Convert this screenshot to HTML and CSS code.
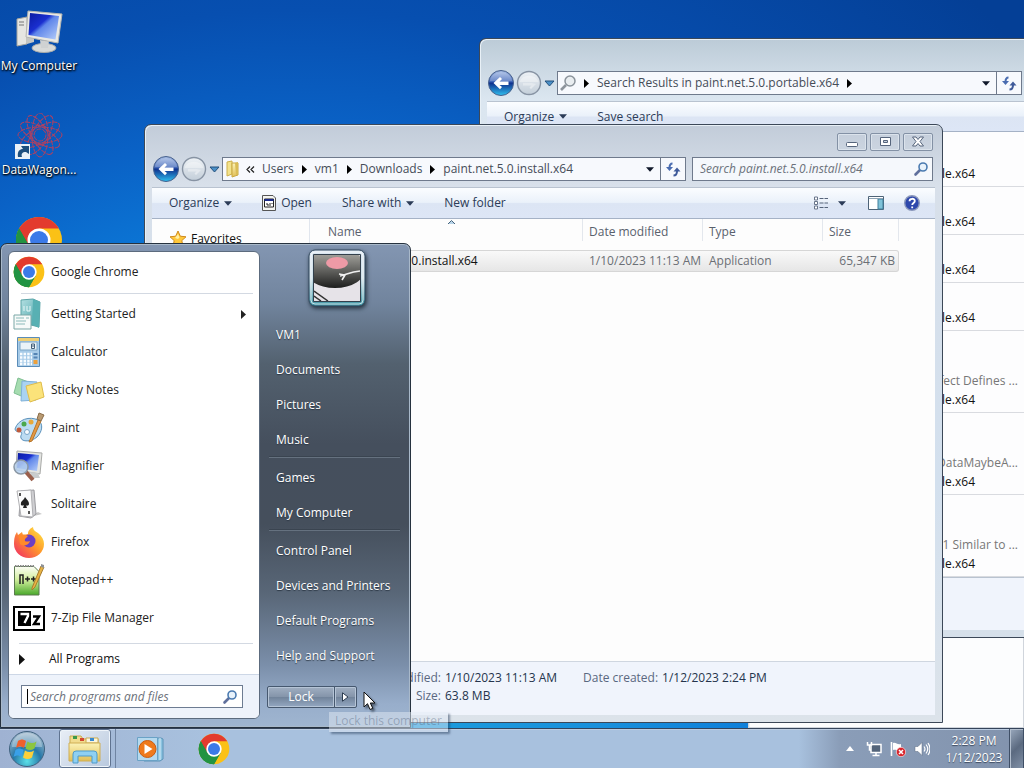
FILE: index.html
```html
<!DOCTYPE html>
<html lang="en">
<head>
<meta charset="utf-8">
<title>Desktop</title>
<link rel="stylesheet" href="styles.css">
</head>
<body>
<svg class="defs" aria-hidden="true">
  <defs>
    <linearGradient id="orb" x1="0" y1="0" x2="0" y2="1"><stop offset="0" stop-color="#a9bfe6"/><stop offset=".45" stop-color="#3d64b8"/><stop offset=".5" stop-color="#0f2f8c"/><stop offset="1" stop-color="#2fc0f0"/></linearGradient>
    <linearGradient id="glass" x1="0" y1="0" x2="0" y2="1"><stop offset="0" stop-color="#eef2f6"/><stop offset="1" stop-color="#c3ced9"/></linearGradient>
    <linearGradient id="screen" x1="0" y1="0" x2="1" y2="1"><stop offset="0" stop-color="#0a1aa0"/><stop offset=".4" stop-color="#1a2fd0"/><stop offset=".5" stop-color="#5f86ea"/><stop offset="1" stop-color="#b8d0fa"/></linearGradient>
    <linearGradient id="folder" x1="0" y1="0" x2="0" y2="1"><stop offset="0" stop-color="#fbf3b8"/><stop offset="1" stop-color="#e2bf55"/></linearGradient>
    <linearGradient id="teal" x1="0" y1="0" x2="1" y2="1"><stop offset="0" stop-color="#b5e0e2"/><stop offset="1" stop-color="#3b9da3"/></linearGradient>
    <linearGradient id="fox" x1="1" y1="0" x2="0" y2="1"><stop offset="0" stop-color="#fff04a"/><stop offset=".45" stop-color="#ff9a2a"/><stop offset="1" stop-color="#f0246a"/></linearGradient>
    <linearGradient id="npp" x1="0" y1="0" x2="0" y2="1"><stop offset="0" stop-color="#fbfdf5"/><stop offset=".45" stop-color="#d5f0a0"/><stop offset="1" stop-color="#49a82a"/></linearGradient>
    <radialGradient id="start" cx=".5" cy=".85" r=".8"><stop offset="0" stop-color="#5be0e8"/><stop offset=".5" stop-color="#2678a8"/><stop offset="1" stop-color="#9eb8cc"/></radialGradient>
    <symbol id="i-chrome" viewBox="0 0 48 48">
      <circle cx="24" cy="24" r="23" fill="#fbc116"/>
      <path d="M24 24 4.100 12.500A23 23 0 0 1 43.900 12.500H24z" fill="#e33b2e"/>
      <path d="M4.100 12.500A23 23 0 0 0 24 47L34 29.700 24 24z" fill="#229342"/>
      <path d="M4.100 12.500 14 29.700 24 24V12.500z" fill="#e33b2e"/>
      <path d="M4.100 12.500 14 29.700 24 35l-0.500 0 10.400-5.300L24 47A23 23 0 0 1 4.100 12.500z" fill="#229342"/>
      <circle cx="24" cy="24" r="11.500" fill="#fff"/><circle cx="24" cy="24" r="9" fill="#3b7ae8"/>
    </symbol>
    <symbol id="i-search" viewBox="0 0 16 16">
      <path d="M7.500 8.500 2.500 13.500" stroke="#5f6f9c" stroke-width="2.600" stroke-linecap="round"/>
      <circle cx="10" cy="6" r="4" fill="#e8f2fb" stroke="#4a7ab0" stroke-width="1.600"/>
    </symbol>
    <symbol id="i-back" viewBox="0 0 28 28">
      <circle cx="14" cy="14" r="12.500" fill="url(#orb)" stroke="#46608c"/>
      <path d="M3 12a11 9 0 0 1 22 0z" fill="#fff" opacity=".22"/>
      <path d="M6.500 14 13 8l2 2-2.500 2.500h9v3.400h-9L15 18l-2 2.200z" fill="#fff"/>
    </symbol>
    <symbol id="i-fwd" viewBox="0 0 28 28">
      <circle cx="14" cy="14" r="11.500" fill="url(#glass)" stroke="#8793a3" stroke-width="1.400"/>
      <path d="M21 15l-5 5-1.500-1.500 2-2H8v-2.600h9z" fill="#e4e9ee"/>
      <path d="M4.500 13a10 9 0 0 1 19 0z" fill="#fff" opacity=".35"/>
    </symbol>
    <symbol id="i-drop" viewBox="0 0 12 12"><path d="M2 4h9L6.500 9z" fill="#4a90c8" stroke="#23507c"/></symbol>
    <symbol id="i-down" viewBox="0 0 9 5"><path d="M0 0h9L4.500 5z" fill="currentColor"/></symbol>
    <symbol id="i-right" viewBox="0 0 5 9"><path d="M0 0v9L5 4.500z" fill="currentColor"/></symbol>
    <symbol id="i-refresh" viewBox="0 0 16 16">
      <path d="M7.500 2.500C5.500 2.500 4.500 4 4.500 7" fill="none" stroke="#4a6cb0" stroke-width="2"/><path d="M1 6h7L4.500 10z" fill="#4a6cb0"/>
      <path d="M8.500 14.500c2.500 0 3.500-1.500 3.500-4.500" fill="none" stroke="#3f5a9a" stroke-width="2"/><path d="M8.500 10.500h7L12 6.500z" fill="#3f5a9a"/>
    </symbol>
    <symbol id="i-computer" viewBox="0 0 48 44">
      <path d="M2 9 12 7v27L2 36z" fill="#e6e6e2" stroke="#a4a49e"/><path d="M12 7l7 2v23l-7 2z" fill="#c5c6c4"/><path d="M4 12h5M4 15h5" stroke="#777"/>
      <ellipse cx="29" cy="38" rx="12" ry="4.500" fill="#d8dad8" stroke="#a9abaa"/><path d="M25 30l9 1-1 7h-7z" fill="#cfd2d2"/>
      <path d="M13 1 47 4 43 33 11 27z" fill="#e9e9e4" stroke="#b5b6b2"/><path d="M15 3 44 6 40.500 29.500 13.500 25z" fill="url(#screen)"/>
    </symbol>
  </defs>
</svg>

<main class="desktop">
  <div class="shortcuts">
    <a class="shortcut" href="#computer">
      <svg class="pic" viewBox="0 0 48 44"><use href="#i-computer"/></svg><span>My Computer</span>
    </a>
    <a class="shortcut wagon" href="#datawagon">
      <svg class="pic" viewBox="0 0 48 48">
        <g fill="none" stroke="#b3405f" stroke-width="1" stroke-dasharray="5 1">
          <circle cx="25" cy="22" r="6"/><circle cx="25" cy="22" r="10"/>
          <ellipse cx="25" cy="22" rx="22" ry="8"/><ellipse cx="25" cy="22" rx="22" ry="8" transform="rotate(30 25 22)"/><ellipse cx="25" cy="22" rx="22" ry="8" transform="rotate(60 25 22)"/><ellipse cx="25" cy="22" rx="22" ry="8" transform="rotate(90 25 22)"/><ellipse cx="25" cy="22" rx="22" ry="8" transform="rotate(120 25 22)"/><ellipse cx="25" cy="22" rx="22" ry="8" transform="rotate(150 25 22)"/>
        </g>
        <path d="M0 31h15v15H0z" fill="#e9f1f7"/><path d="M3 44c-1-6 2-8 5-8l-2-3h8v8l-3-2c-4 0-5 2-4 5z" fill="#1d4f7e"/>
      </svg><span>DataWagon...</span>
    </a>
    <a class="shortcut chrome" href="#chrome" aria-label="Google Chrome"><svg class="pic" viewBox="0 0 48 48"><use href="#i-chrome"/></svg></a>
  </div>

  <div class="window blank"></div>

  <section class="window results">
    <div class="caption"></div>
    <div class="navrow">
      <button class="round" aria-label="Back"><svg><use href="#i-back"/></svg></button>
      <button class="round" aria-label="Forward"><svg><use href="#i-fwd"/></svg></button>
      <button class="recent" aria-label="Recent pages"><svg><use href="#i-drop"/></svg></button>
      <nav class="address" aria-label="Location">
        <svg class="place" viewBox="0 0 18 18"><path d="M7 11 2 16" stroke="#8d949c" stroke-width="2.600"/><circle cx="11" cy="7" r="5" fill="#e9edf0" stroke="#8b939b" stroke-width="1.500"/></svg>
        <svg class="sep"><use href="#i-right"/></svg>
        <button class="crumb">Search Results in paint.net.5.0.portable.x64</button>
        <svg class="sep"><use href="#i-right"/></svg>
        <button class="drop" aria-label="Previous locations"><svg><use href="#i-down"/></svg></button>
        <button class="refresh" aria-label="Refresh"><svg><use href="#i-refresh"/></svg></button>
      </nav>
    </div>
    <div class="client">
      <div class="commands"><button>Organize <svg class="tri"><use href="#i-down"/></svg></button><button>Save search</button></div>
      <ul class="hits">
        <li class="first"><span>portable.x64</span></li>
        <li><span>portable.x64</span></li>
        <li><span>portable.x64</span></li>
        <li><span>portable.x64</span></li>
        <li class="tall"><em>Effect Defines ...</em><span>portable.x64</span></li>
        <li class="tall"><em>DataMaybeA...</em><span>portable.x64</span></li>
        <li class="tall"><em>t'1 Similar to ...</em><span>portable.x64</span></li>
      </ul>
      <div class="details"></div>
    </div>
  </section>

  <section class="window explorer">
    <div class="caption">
      <button aria-label="Minimize"><svg viewBox="0 0 16 16"><rect x="2.500" y="8.500" width="11" height="4" rx="1" fill="#fff" stroke="#56657c"/></svg></button>
      <button aria-label="Maximize"><svg viewBox="0 0 16 16"><path d="M3.500 3.500h10v8h-10zM6.500 6.500v2h4v-2z" fill="#fff" fill-rule="evenodd" stroke="#56657c"/></svg></button>
      <button aria-label="Close"><svg viewBox="0 0 16 16"><path d="M2.500 3H6l2 2.500L10 3h3.500L10 7.500l3.500 4.500H10L8 9.500 6 12H2.500L6 7.500z" fill="#fff" stroke="#56657c"/></svg></button>
    </div>
    <div class="navrow">
      <button class="round" aria-label="Back"><svg><use href="#i-back"/></svg></button>
      <button class="round" aria-label="Forward"><svg><use href="#i-fwd"/></svg></button>
      <button class="recent" aria-label="Recent pages"><svg><use href="#i-drop"/></svg></button>
      <nav class="address" aria-label="Location">
        <svg class="place" viewBox="0 0 18 18"><path d="M3 2l5-1v13l-5 2z" fill="#f3e28c" stroke="#cdb04a"/><path d="M8 3h6v12l-6 2z" fill="url(#folder)" stroke="#c9a844"/><path d="M11 3l3-1v12l-2 1z" fill="#d9bc56"/></svg>
        <svg class="chev" viewBox="0 0 9 7"><path d="M4 .5 1 3.500l3 3M8 .5 5 3.500l3 3" fill="none" stroke="#222" stroke-width="1.200"/></svg>
        <button class="crumb">Users</button><svg class="sep"><use href="#i-right"/></svg>
        <button class="crumb">vm1</button><svg class="sep"><use href="#i-right"/></svg>
        <button class="crumb">Downloads</button><svg class="sep"><use href="#i-right"/></svg>
        <button class="crumb">paint.net.5.0.install.x64</button>
        <button class="drop" aria-label="Previous locations"><svg><use href="#i-down"/></svg></button>
        <button class="refresh" aria-label="Refresh"><svg><use href="#i-refresh"/></svg></button>
      </nav>
      <label class="find"><input type="text" aria-label="Search folder" placeholder="Search paint.net.5.0.install.x64"><svg><use href="#i-search"/></svg></label>
    </div>
    <div class="client">
      <div class="commands">
        <button>Organize <svg class="tri"><use href="#i-down"/></svg></button>
        <button class="open"><svg class="app" viewBox="0 0 14 16"><path d="M.5.5H11l2.500 2.500v12.500H.5z" fill="#f4f5f2" stroke="#555"/><path d="M2.500 4h9v8h-9z" fill="#fff" stroke="#222"/><path d="M2.500 4h9v2h-9z" fill="#1a2a8a"/><path d="M4 9h2v2M8 8v3M9.500 8.500h1" stroke="#222" fill="none"/></svg>Open</button>
        <button>Share with <svg class="tri"><use href="#i-down"/></svg></button>
        <button>New folder</button>
        <span class="spring"></span>
        <button class="view" aria-label="Change your view"><svg class="list" viewBox="0 0 16 14"><path d="M1.500 1h3v3h-3zM1.500 5.500h3v3h-3zM1.500 10h3v3h-3z" fill="#fff" stroke="#68758a"/><path d="M6.500 2.500h4M11.500 2.500H15M6.500 7h4M11.500 7H15M6.500 11.500h4M11.500 11.500H15" stroke="#56647a"/></svg><svg class="tri"><use href="#i-down"/></svg></button>
        <button class="pane" aria-label="Show the preview pane"><svg viewBox="0 0 16 14"><path d="M.5.500h15v13H.5z" fill="#fff" stroke="#4d6377"/><path d="M10 3h5v10h-5z" fill="#7fc2d8" stroke="#417f9b"/><path d="M1 2.500h14" stroke="#8aa1b3"/></svg></button>
        <button class="help" aria-label="Get help"><svg viewBox="0 0 16 16"><circle cx="8" cy="8" r="7.300" fill="#2e48ac" stroke="#8b98bb" stroke-width="1.400"/><path d="M5.500 6.200C5.500 3 10.800 3 10.800 6 10.800 8 8.200 8 8.200 10M8.200 11.500v1.700" fill="none" stroke="#fff" stroke-width="1.800"/></svg></button>
      </div>
      <div class="body">
        <aside class="tree"><a href="#favorites"><svg viewBox="0 0 16 16"><path d="M8 0l2.300 5.200 5.700.6-4.200 3.800 1.200 5.600L8 12.400l-5 2.800 1.200-5.600L0 5.800l5.700-.6z" fill="#ffc83a" stroke="#d08a1c"/><path d="M8 3l1.500 3.500L8 8 5 7z" fill="#fff0a8"/></svg>Favorites</a></aside>
        <div class="files">
          <svg class="sorted" viewBox="0 0 7 4"><path d="M0 4 3.500.5 7 4" fill="#b8d4e8" stroke="#47647c"/></svg>
          <table>
            <colgroup><col class="c-name"><col class="c-date"><col class="c-type"><col class="c-size"></colgroup>
            <thead><tr><th>Name</th><th>Date modified</th><th>Type</th><th>Size</th></tr></thead>
            <tbody><tr><td>paint.net.5.0.install.x64</td><td>1/10/2023 11:13 AM</td><td>Application</td><td>65,347 KB</td></tr></tbody>
          </table>
        </div>
      </div>
      <dl class="details">
        <dt>Date modified:</dt><dd>1/10/2023 11:13 AM</dd><dt>Date created:</dt><dd>1/12/2023 2:24 PM</dd>
        <dt>Size:</dt><dd>63.8 MB</dd>
      </dl>
    </div>
  </section>

  <section class="startmenu" aria-label="Start menu">
    <div class="programs">
      <ul>
        <li class="pinned"><a href="#c"><svg class="ico" viewBox="0 0 48 48"><use href="#i-chrome"/></svg>Google Chrome</a></li>
        <li><a href="#g"><svg class="ico" viewBox="0 0 32 32"><path d="M8 2l12-1 7 3-1 25-8-2-10 1z" fill="url(#teal)" stroke="#5aa3a6"/><path d="M20 1l7 3-1 26-7-4z" fill="#58b0b3"/><path d="M11 8v5M14 8v5h3V8" stroke="#e8f8f8" fill="none"/><path d="M1 17h17v14H1z" fill="#f7faf9" stroke="#7aa7a6"/><path d="M3 20h8M3 23h10M3 26h9M13 20h3" stroke="#8bbaba"/></svg>Getting Started<svg class="more"><use href="#i-right"/></svg></a></li>
        <li><a href="#k"><svg class="ico" viewBox="0 0 32 32"><path d="M4.500 1.500h22v29h-22z" fill="#a7cbe8" stroke="#5a8cb8"/><path d="M5 2h21v3H5z" fill="#efcf74"/><path d="M7 6h17v8H7z" fill="#eaf3f8" stroke="#7da6c5"/><path d="M18.500 8h3v4.500h-3zM18.500 10h3" fill="none" stroke="#44607a"/><path d="M7 18h12M7 21.500h12M7 25h12M7 28h12" stroke="#f8fcff" stroke-width="2.400" stroke-dasharray="2.400 1.200"/><path d="M20.500 18h4M20.500 21.500h4" stroke="#5484b4" stroke-width="2"/><path d="M20.500 26h4" stroke="#eda03b" stroke-width="4"/></svg>Calculator</a></li>
        <li><a href="#s"><svg class="ico" viewBox="0 0 32 32"><path d="M5 4l13 5-5 15-12-5z" fill="#a6dcb0" stroke="#7fbf92"/><path d="M9 7l15 1-1 18-15 1z" fill="#a9d3f2" stroke="#7fb1d8"/><path d="M13 12l15-4 3 15-14 5z" fill="#fbe37a" stroke="#e0bd4b"/></svg>Sticky Notes</a></li>
        <li><a href="#p"><svg class="ico" viewBox="0 0 32 32"><path d="M2 17C5 7 17 4 25 8c6 4 4 12-1 17-6 5-15 5-16 1-1-3 2-4 0-6-2-1-5 1-6-3z" fill="#bcdcf2" stroke="#5a90ba"/><circle cx="6" cy="18" r="2.500" fill="#c05a3a"/><circle cx="11" cy="12" r="2.500" fill="#4ba84b"/><circle cx="18" cy="10" r="2.500" fill="#e8a93a"/><circle cx="14" cy="20" r="2.500" fill="#f8fcff" stroke="#7aa6c8"/><path d="M16 30l9-22 3 1-9 20z" fill="#e59a45" stroke="#b5742a"/><path d="M24 7l2-6 5 2-3 6z" fill="#b99a72" stroke="#8a6c48"/></svg>Paint</a></li>
        <li><a href="#m"><svg class="ico" viewBox="0 0 32 32"><path d="M4 1l25 2-2 21-24-4z" fill="#e4e5e2" stroke="#a9aaa8"/><path d="M5 3l21 2-2 16-20-3z" fill="url(#screen)"/><path d="M17 22l8 1 2 5h-9z" fill="#c9cccd"/><path d="M13 22l7 8" stroke="#9a5f4c" stroke-width="4"/><circle cx="8" cy="17" r="7" fill="#b5d0ee" fill-opacity=".85" stroke="#8b98a5" stroke-width="1.500"/></svg>Magnifier</a></li>
        <li><a href="#o"><svg class="ico" viewBox="0 0 32 32"><path d="M17 29l12-3-4-2z" fill="#c7c7c7"/><path d="M8 3l13-1 2 24-5 4-12-2z" fill="#cfcfd2" stroke="#9a9a9e"/><path d="M4 3l14-1 2 27-12-1z" fill="#fcfcfc" stroke="#b0b0b3"/><path d="M12 9c2 3 4 4 4 7 0 2-3 2-3 1l1 3h-4l1-3c-1 1-4 1-3-2 0-2 3-3 4-6z" fill="#222"/><path d="M6 5h2v3H6zM15 23h2v3h-2z" fill="#555"/></svg>Solitaire</a></li>
        <li><a href="#f"><svg class="ico" viewBox="0 0 32 32"><path d="M4 6l1 3 4-3 1 3 5-1c0-4 3-6 5-7 0 3 2 4 5 6 4 3 6 7 6 11a15 14 0 0 1-30 0C1 12 2 9 4 6z" fill="url(#fox)"/><circle cx="16" cy="15" r="6.500" fill="#6b3fc4"/><path d="M6 10c3-2 6-2 9 0l-3 3c-1 3 2 3 5 2-1 4-6 6-10 3z" fill="#ff8a2a"/></svg>Firefox</a></li>
        <li><a href="#n"><svg class="ico" viewBox="0 0 32 32"><path d="M1.500 2.500H21l5 5v23.500H1.500z" fill="url(#npp)" stroke="#5c7a4e"/><path d="M2 2h20" stroke="#888" stroke-width="2" stroke-dasharray="1.500 1"/><path d="M7 20v-9h3v9M12 15h5M14.500 12.500v5M18 15h5M20.500 12.500v5" fill="none" stroke="#222" stroke-width="1.500"/><path d="M19 24 28 2l3 1-9 20-3 3z" fill="#e9b444" stroke="#a87c2e"/><path d="M28 0l3 1v3l-3-1z" fill="#8f9296"/></svg>Notepad++</a></li>
        <li><a href="#z"><svg class="ico" viewBox="0 0 32 32"><path d="M1 5h30v23H1z" fill="#fff" stroke="#000" stroke-width="2"/><path d="M5 9h13v15H5z"/><path d="M7.500 12H15v2l-3.500 7" fill="none" stroke="#fff" stroke-width="2.400"/><path d="M20 14.500h6l-5 7.500h6" fill="none" stroke="#000" stroke-width="2.400"/></svg>7-Zip File Manager</a></li>
      </ul>
      <a class="all" href="#all"><svg><use href="#i-right"/></svg>All Programs</a>
      <div class="lookup"><label><span class="caret"></span><input type="text" aria-label="Search programs and files" placeholder="Search programs and files"><svg><use href="#i-search"/></svg></label></div>
    </div>
    <div class="places">
      <svg class="avatar" viewBox="0 0 58 58">
        <defs><linearGradient id="frame" x1="0" y1="0" x2="0" y2="1"><stop offset="0" stop-color="#dbe7f2"/><stop offset=".5" stop-color="#cfe0e8"/><stop offset="1" stop-color="#3d95a5"/></linearGradient><linearGradient id="disc" x1="0" y1="0" x2="0" y2="1"><stop offset="0" stop-color="#b9b8b2"/><stop offset="1" stop-color="#1d1e1d"/></linearGradient><clipPath id="photo"><path d="M6 6h46v46H6z"/></clipPath></defs>
        <rect x="1" y="1" width="56" height="56" rx="6" fill="url(#frame)" stroke="#344b60"/><rect x="3" y="3" width="52" height="52" rx="4" fill="none" stroke="#fff" stroke-opacity=".7"/>
        <g clip-path="url(#photo)"><path d="M6 6h46v46H6z" fill="#e6e3e8"/><ellipse cx="27" cy="19" rx="31" ry="20" fill="url(#disc)"/><ellipse cx="29" cy="14" rx="11" ry="6" fill="#ee9aa6"/><path d="M32 27c6-1 10-4 20-5M31 25l6 1-3 5" fill="none" stroke="#f0f0f0" stroke-width="1.600"/><path d="M6 42l14 10M6 47l7 5" stroke="#333" stroke-width="1.500"/></g>
        <path d="M5.500 5.500h47v47h-47z" fill="none" stroke="#33404c"/>
      </svg>
      <ul>
        <li><a href="#1">VM1</a></li><li><a href="#2">Documents</a></li><li><a href="#3">Pictures</a></li><li><a href="#4">Music</a></li>
        <li class="rule"><a href="#5">Games</a></li><li><a href="#6">My Computer</a></li>
        <li class="rule"><a href="#7">Control Panel</a></li><li><a href="#8">Devices and Printers</a></li><li><a href="#9">Default Programs</a></li><li><a href="#10">Help and Support</a></li>
      </ul>
      <div class="power"><button class="lock">Lock</button><button class="opts" aria-label="More options"><svg viewBox="0 0 7 10"><path d="M.5.8v8.400L6 5z" fill="#fff" stroke="#2c3c50"/></svg></button></div>
    </div>
  </section>
  <div class="tip" role="tooltip">Lock this computer</div>
  <svg class="cursor" viewBox="0 0 13 20"><path d="M1 1v15l3.500-3.300L7 18.500l2.800-1.200L7.300 12H12z" fill="#fff" stroke="#111"/></svg>
</main>

<footer class="taskbar">
  <button class="start" aria-label="Start"><svg viewBox="0 0 38 38"><circle cx="19" cy="19" r="17.500" fill="url(#start)" stroke="#40627f"/><path d="M4 17a15 14 0 0 1 30 0z" fill="#fff" opacity=".3"/><path d="M10 11c3-2 5-2 8 0l-2 7c-3-2-5-2-8 0z" fill="#f0602c"/><path d="M19.500 11.500c3 2 6 2 9 0l-2 7c-3 2-6 2-9 0z" fill="#8cc63f"/><path d="M7.500 20c3-2 5-2 8 0l-2 7c-3-2-5-2-8 0z" fill="#3aa0e8"/><path d="M17 20.500c3 2 6 2 9 0l-2 7c-3 2-6 2-9 0z" fill="#fcd03a"/></svg></button>
  <button class="task active" aria-label="Windows Explorer"><svg viewBox="0 0 34 32"><path d="M2 3h11l2 3h15v20H2z" fill="#f1dc8e" stroke="#c9aa50"/><path d="M5 3h4v3H5z" fill="#3a9a4a"/><path d="M12 5h4v3h-4z" fill="#d3482f"/><path d="M18 5h12v5H18z" fill="#fbf6dd" stroke="#c9aa50"/><path d="M22 5h4v3h-4z" fill="#3a8ad0"/><path d="M1 10h31v18H1z" fill="url(#folder)" stroke="#cfae55"/><path d="M5 30V21q0-3 3-3h18q3 0 3 3v9h-5v-7H10v7z" fill="#8fd0f2" stroke="#4f9bcb"/></svg></button>
  <span class="stack"></span>
  <button class="task" aria-label="Windows Media Player"><svg class="wmp" viewBox="0 0 28 26"><path d="M8 2h17l2 1v20l-3 2H8z" fill="#8cc3e0" stroke="#5b93b8"/><path d="M24 2v22" stroke="#d8eef8"/><path d="M1.500 1.500h20v23h-20z" fill="#b5d9ee" stroke="#6aa2c6"/><circle cx="11.500" cy="13" r="8.500" fill="#ef7a1c" stroke="#c95c10"/><path d="M8.500 8v10l8-5z" fill="#fff"/></svg></button>
  <button class="task" aria-label="Google Chrome"><svg class="gc" viewBox="0 0 48 48"><use href="#i-chrome"/></svg></button>
  <div class="tray">
    <button aria-label="Show hidden icons"><svg class="up" viewBox="0 0 8 5"><path d="M0 5h8L4 0z" fill="#fff"/></svg></button>
    <button aria-label="Network"><svg viewBox="0 0 16 16"><path d="M5 3.500h10v8H5zM10 11.500v3M6.500 14.500h7" fill="#53647a" stroke="#fff" stroke-width="1.500"/><path d="M1.500 1v3h4V1M3.500 4v5H5" fill="none" stroke="#fff" stroke-width="1.500"/></svg></button>
    <button aria-label="Action Center"><svg viewBox="0 0 16 16"><path d="M1.500 1v14" stroke="#fff" stroke-width="1.600"/><path d="M3 2c3-1 4 2 8 1v6c-4 1-5-1-8 0z" fill="#fff"/><circle cx="11" cy="11" r="4.700" fill="#d8252d" stroke="#fff" stroke-width=".6"/><path d="M9 9l4 4M13 9l-4 4" stroke="#fff" stroke-width="1.500"/></svg></button>
    <button aria-label="Volume"><svg viewBox="0 0 16 16"><path d="M1 5.500h3l4-4v13l-4-4H1z" fill="#fff" stroke="#5a6a80" stroke-width=".5"/><path d="M10 5.500q2 2.500 0 5M12 3.500q3.500 4.500 0 9M14 2q4 6 0 12" fill="none" stroke="#fff" stroke-width="1.200"/></svg></button>
    <button class="clock"><time>2:28 PM</time><time>1/12/2023</time></button>
  </div>
  <button class="peek" aria-label="Show desktop"></button>
</footer>
</body>
</html>
```
FILE: styles.css
```css
* { box-sizing: border-box; }
body {
  margin: 0;
  height: 100vh;
  display: flex;
  flex-direction: column;
  overflow: hidden;
  font: 12px/18px "Open Sans", "Noto Sans", sans-serif;
  color: #222;
}
button { font: inherit; color: inherit; background: none; border: 0; padding: 0; margin: 0; display: flex; align-items: center; white-space: nowrap; }
a { color: inherit; text-decoration: none; }
ul, dl, dd { margin: 0; padding: 0; list-style: none; }
input { font: inherit; }
svg { flex: none; display: block; }
.defs { position: absolute; width: 0; height: 0; }

.desktop {
  position: relative;
  flex: 1;
  min-height: 0;
  background: radial-gradient(circle at 300px 740px, #1fa3dc 0, #1890dc 300px, #0c7cda 480px, #0a62c6 610px, #074fb0 730px, #043f96 1000px);
}

/* Desktop shortcuts */
.shortcuts { display: flex; flex-direction: column; width: 78px; padding-top: 10px; }
.shortcut { display: flex; flex-direction: column; align-items: center; gap: 3px; height: 103px; color: #fff; text-shadow: 1px 1px 2px #000, 0 1px 2px #000; white-space: nowrap; }
.shortcut .pic { width: 48px; height: 44px; }
.shortcut.wagon .pic { width: 48px; height: 48px; }
.shortcut.wagon { gap: 0; }
.shortcut.chrome .pic { width: 48px; height: 48px; }

/* Window frames */
.window {
  position: absolute;
  display: flex;
  flex-direction: column;
  padding: 0 7px 7px;
  border: 1px solid #3c4858;
  border-radius: 7px 7px 0 0;
  background: linear-gradient(#bccbd7, #dbe6f0 60px, #d6e0ea);
  box-shadow: inset 1px 1px 0 #e8f0f6;
}
.explorer { left: 144px; top: 124px; width: 799px; height: 599px; background: linear-gradient(#c2ccd9, #d8e0ea 60px, #d3e0ee 60%, #dce3ea); }
.results { left: 479px; top: 38px; right: 0; height: 600px; padding-right: 0; border-right: 0; border-top-right-radius: 0; }
.blank { left: 748px; top: 600px; right: 0; bottom: 0; background: #fcfdfe; border-color: #d0d5dc; border-radius: 0; }

.caption { display: flex; justify-content: flex-end; gap: 3px; height: 30px; padding: 8px 2px 0 0; }
.caption button { width: 30px; height: 18px; justify-content: center; border: 1px solid #8391a5; border-radius: 2px; box-shadow: inset 0 0 0 1px #dbe3ec; }
.caption svg { width: 16px; height: 16px; }

.navrow { display: flex; align-items: center; height: 28px; margin-bottom: 4px; padding-right: 2px; }
.round svg { width: 28px; height: 28px; }
.recent { margin-right: 2px; }
.recent svg { width: 12px; height: 12px; }
.address { flex: 1; min-width: 0; display: flex; align-items: center; height: 24px; border: 1px solid #6f7a8c; background: #f7f9fd; color: #454c58; }
.address .place { width: 18px; height: 18px; margin: 0 6px 0 1px; }
.address .sep { width: 5px; height: 9px; margin: 0 8px; color: #000; }
.results .place + .sep { margin-left: 1px; }
.address .chev { width: 9px; height: 7px; margin: 0 7px 0 -2px; }
.drop { margin-left: auto; padding: 0 6px; }
.drop svg { width: 8px; height: 5px; color: #10182a; }
.refresh { align-self: stretch; width: 25px; justify-content: center; border-left: 1px solid #6f7a8c; }
.refresh svg { width: 16px; height: 16px; }
.find { display: flex; align-items: center; width: 241px; height: 24px; margin-left: 6px; padding: 0 3px 0 7px; border: 1px solid #6f7a8c; background: #f5f8fc; }
.find input { flex: 1; min-width: 0; border: 0; padding: 0; background: none; outline: 0; }
.find svg { width: 16px; height: 16px; }
input::placeholder { color: #6c727b; font-style: italic; opacity: 1; }

.client { flex: 1; min-height: 0; display: flex; flex-direction: column; background: #fdfdfe; }
.commands { display: flex; align-items: center; gap: 30px; height: 32px; padding: 0 14px 0 17px; background: linear-gradient(#fbfdff, #eaf1fa 48%, #dce5f4 52%, #dde6f6); border-top: 1px solid #b9c3d0; border-bottom: 1px solid #a5b2c6; color: #2b3b57; }
.commands button { gap: 5px; }
.tri { width: 8px; height: 5px; color: #2b3b57; }
.commands .app { width: 14px; height: 16px; }
.commands .view { gap: 9px; margin-right: -8px; }
.commands .list { width: 16px; height: 14px; }
.commands .pane svg { width: 16px; height: 14px; }
.commands .help { margin-left: -10px; margin-right: 1px; }
.commands .help svg { width: 16px; height: 16px; }
.spring { flex: 1; }

.body { flex: 1; display: flex; min-height: 0; background: #fdfdfd; }
.tree { width: 158px; padding: 11px 0 0 18px; border-right: 1px solid #e1e6ee; color: #111; }
.tree a { display: flex; align-items: center; gap: 5px; }
.tree svg { width: 16px; height: 16px; }
.files { position: relative; flex: 1; }
.sorted { position: absolute; left: 138px; top: 1px; width: 7px; height: 4px; }
table { width: 589px; table-layout: fixed; border-collapse: separate; border-spacing: 0; color: #6b6f75; }
.c-name { width: 273px; }
.c-date, .c-type { width: 120px; }
.c-size { width: 76px; }
th { height: 31px; padding: 0 0 6px 6px; text-align: left; font-weight: normal; color: #59616d; background: linear-gradient(#e3e7ed, #e3e7ed) right top / 1px 22px no-repeat; }
th:first-child { padding-left: 18px; }
td { height: 22px; padding: 0 0 0 6px; background: linear-gradient(#f9f9f9, #e6e6e6); border: solid #d6d6d6; border-width: 1px 0; white-space: nowrap; }
td:first-child { padding-left: 37px; color: #111; border-left-width: 1px; }
td:last-child { padding: 0 3px 0 0; text-align: right; border-right-width: 1px; border-radius: 0 3px 3px 0; }

.details { height: 54px; border-top: 1px solid #cfd6e0; background: #f0f4fc; }
dl.details { display: grid; grid-template-columns: 289px 134px auto 1fr; column-gap: 4px; align-content: start; padding-top: 7px; color: #25344c; }
dt { color: #5a6880; text-align: right; }

.hits { flex: 1; color: #111; }
.hits li { display: flex; flex-direction: column; justify-content: flex-end; height: 48px; padding: 0 49px 3px 0; border-bottom: 1px solid #d9dbe0; text-align: right; }
.hits li.first { height: 55px; }
.hits li.tall { height: 82px; }
.hits em { font-style: normal; color: #777; margin: 0 -43px 1px 0; }
.results .details { border-top-color: #b9c3d0; }

/* Start menu */
.startmenu { position: absolute; left: 0; bottom: 0; display: flex; width: 411px; padding: 7px 0 8px 7px; border: 1px solid #26323f; border-radius: 7px 7px 0 0; box-shadow: inset 0 0 0 1px #a9b9ca; background: linear-gradient(#8396b2, #71849d 60px, #53616f 120px, #454f5d 200px, #454f5c 280px, #596778 350px, #7a8ea9 420px, #98aecb 460px, #9fb5d0); }
.programs { width: 252px; display: flex; flex-direction: column; border: 1px solid #5c6b7e; border-radius: 6px; background: #fff; overflow: hidden; }
.programs li a { display: flex; align-items: center; gap: 6px; height: 38px; padding: 0 13px 0 4px; }
.programs .ico { width: 32px; height: 32px; }
.programs .pinned { padding-top: 1px; margin-bottom: 1px; }
.programs .pinned::after { content: ""; display: block; height: 1px; margin: 2px 6px 0 12px; background: #d3d9e2; }
.programs .more { width: 5px; height: 9px; margin-left: auto; }
.all { display: flex; align-items: center; gap: 24px; height: 31px; margin: 6px 6px 0 10px; border-top: 1px solid #d3d9e2; color: #111; }
.all svg { width: 6px; height: 11px; }
.lookup { padding: 10px 16px 10px 12px; background: #eef3fb; border-top: 1px solid #cdd7e6; }
.lookup label { display: flex; align-items: center; height: 23px; padding: 0 4px 0 5px; border: 1px solid #6d7c92; background: #fff; }
.lookup input { flex: 1; min-width: 0; border: 0; padding: 0 0 0 2px; outline: 0; background: none; }
.lookup svg { width: 16px; height: 16px; }
.caret { width: 1px; height: 15px; background: #000; }

.places { flex: 1; padding-left: 9px; color: #fff; text-shadow: 0 1px 1px #2c3846; }
.avatar { width: 58px; height: 58px; margin: -2px auto 10px 39px; filter: drop-shadow(1px 2px 2px #22303c); }
.places li { display: flex; align-items: center; height: 35px; padding-left: 7px; margin-right: 10px; }
.places .rule { height: 38px; padding-top: 2px; border-top: 1px solid #65717f; box-shadow: 0 -1px 0 #3a4450; }
.power { display: flex; height: 22px; margin: 13px 0 0 -2px; }
.power button { justify-content: center; border: 1px solid #46586f; box-shadow: inset 0 0 0 1px #b5c4d6; background: linear-gradient(#a0afc2, #8494a9 50%, #72849b 52%, #94a8c2); }
.lock { width: 68px; border-radius: 2px 0 0 2px; }
.power .opts { width: 23px; margin-left: -1px; border-radius: 0 2px 2px 0; }
.power svg { width: 7px; height: 10px; }
.tip { position: absolute; left: 329px; bottom: -4px; height: 20px; padding: 0 6px; background: rgba(225, 234, 244, .5); color: rgba(80, 95, 120, .4); box-shadow: 2px 2px 2px rgba(40, 60, 90, .5); }
.cursor { position: absolute; left: 363px; bottom: 17px; width: 13px; height: 20px; filter: drop-shadow(2px 2px 1px #4c5a6c); }

/* Taskbar */
.taskbar { display: flex; align-items: stretch; height: 40px; border-top: 1px solid #34435a; box-shadow: inset 0 1px 0 #bccde2; background: linear-gradient(90deg, #9fb2d2, #a8c1de 20%, #a8c1de 78%, #8a9db8 82%, #8293ad); }
.taskbar > * { flex: none; }
.start { width: 54px; justify-content: center; }
.start svg { width: 38px; height: 38px; }
.task { width: 64px; justify-content: center; }
.task svg { width: 34px; height: 32px; }
.task.active { width: 52px; margin-left: 5px; border: 1px solid #5f7390; border-radius: 3px; background: linear-gradient(135deg, #e8eef6, #b9c9de); box-shadow: inset 0 0 0 1px #eef4fa; }
.stack { width: 8px; margin-right: 2px; margin-left: -3px; border-right: 1px solid #6f84a2; }
.task .wmp { width: 28px; height: 26px; }
.task .gc { width: 32px; height: 32px; }
.tray { margin-left: auto; display: flex; color: #fff; }
.tray button { width: 24px; justify-content: center; }
.tray svg { width: 16px; height: 16px; }
.tray .up { width: 8px; height: 5px; }
.tray .clock { width: 75px; padding-left: 5px; flex-direction: column; line-height: 17px; text-shadow: 0 1px 1px #3c4a60; }
.peek { width: 15px; border: 1px solid #3f4f66; border-width: 0 1px; background: linear-gradient(135deg, #9aa9bd, #5b6a80 50%, #8090a6); box-shadow: inset 1px 1px 0 #b3bfce; }
```
